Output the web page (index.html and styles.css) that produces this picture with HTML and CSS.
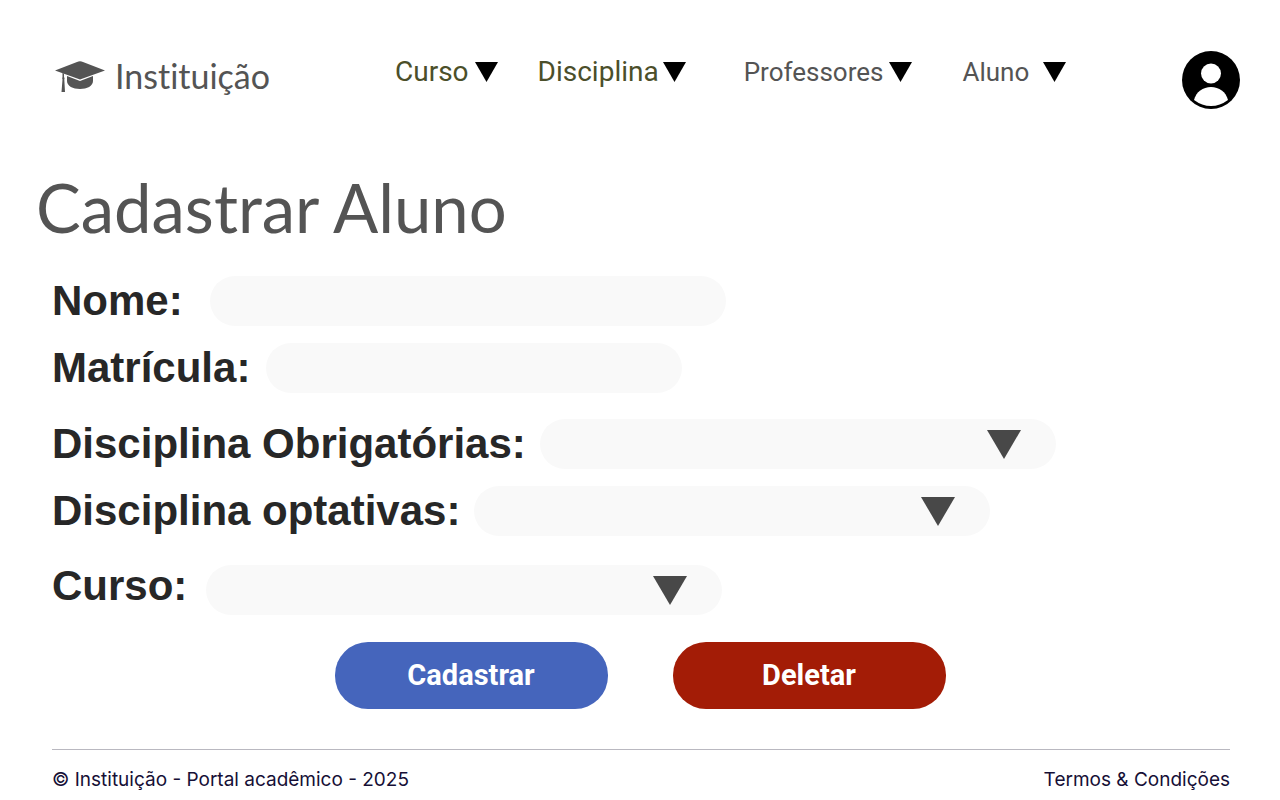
FILE: index.html
```html
<!DOCTYPE html>
<html lang="pt-BR">
<head>
<meta charset="utf-8">
<meta name="viewport" content="width=device-width, initial-scale=1">
<title>Cadastrar Aluno</title>
<link rel="stylesheet" href="styles.css">
</head>
<body>
<header class="header">
  <a class="brand" href="#">
    <svg class="brand-icon" viewBox="0 0 50 31" aria-hidden="true">
      <path d="M0 9.500L22 1Q25 -.3 28 1L50 9.500L25 18.500Z"/>
      <path d="M12 15L25 20L38 15V20C38 25 32 28 25 28S12 25 12 20Z"/>
      <path d="M7.500 12L9 12.500V16Q10 17 9.300 18.500L10 31H6.500L7.500 18.500Q6.800 17 7.500 16Z"/>
    </svg>
    <span>Instituição</span>
  </a>
  <nav class="nav">
    <button class="nav-item olive" type="button">Curso <svg class="caret" viewBox="0 0 23 20" aria-hidden="true"><path d="M0 0H23L11.500 20Z"/></svg></button>
    <button class="nav-item olive tight" type="button">Disciplina <svg class="caret" viewBox="0 0 23 20" aria-hidden="true"><path d="M0 0H23L11.500 20Z"/></svg></button>
    <button class="nav-item" type="button">Professores <svg class="caret" viewBox="0 0 23 20" aria-hidden="true"><path d="M0 0H23L11.500 20Z"/></svg></button>
    <button class="nav-item loose" type="button">Aluno <svg class="caret" viewBox="0 0 23 20" aria-hidden="true"><path d="M0 0H23L11.500 20Z"/></svg></button>
  </nav>
  <button class="profile" type="button" aria-label="Perfil">
    <svg viewBox="0 0 58 58" aria-hidden="true">
      <circle cx="29" cy="29" r="29"/>
      <circle class="person" cx="29" cy="22.500" r="10"/>
      <path class="person" d="M12 49C14 41 21 36 29 36S44 41 46 49Q38 55 29 55T12 49Z"/>
    </svg>
  </button>
</header>
<main class="main">
  <h1 class="title">Cadastrar Aluno</h1>
  <form class="form">
    <div class="group">
      <div class="row"><label class="label nome" for="nome">Nome:</label><input class="field" id="nome" type="text"></div>
      <div class="row"><label class="label matricula" for="matricula">Matrícula:</label><input class="field short" id="matricula" type="text"></div>
    </div>
    <div class="group">
      <div class="row"><label class="label obrigatorias" for="obrigatorias">Disciplina Obrigatórias:</label>
        <div class="field select"><select id="obrigatorias"><option></option></select><svg class="arrow" viewBox="0 0 34 29" aria-hidden="true"><path d="M0 0H34L17 29Z"/></svg></div></div>
      <div class="row"><label class="label optativas" for="optativas">Disciplina optativas:</label>
        <div class="field select"><select id="optativas"><option></option></select><svg class="arrow" viewBox="0 0 34 29" aria-hidden="true"><path d="M0 0H34L17 29Z"/></svg></div></div>
    </div>
    <div class="row last"><label class="label curso" for="curso">Curso:</label>
      <div class="field select"><select id="curso"><option></option></select><svg class="arrow" viewBox="0 0 34 29" aria-hidden="true"><path d="M0 0H34L17 29Z"/></svg></div></div>
    <div class="actions">
      <button class="button primary" type="submit">Cadastrar</button>
      <button class="button danger" type="button">Deletar</button>
    </div>
  </form>
</main>
<footer class="footer">
  <span>© Instituição - Portal acadêmico - 2025</span>
  <a href="#">Termos &amp; Condições</a>
</footer>
</body>
</html>
```
FILE: styles.css
```css
* {
  box-sizing: border-box;
}

body {
  margin: 0;
  background: #fff;
  color: #272727;
  font-family: "Liberation Sans", Arial, sans-serif;
}

button,
select,
input {
  margin: 0;
  padding: 0;
  border: 0;
  background: none;
  font: inherit;
}

button {
  cursor: pointer;
}

a {
  color: inherit;
  text-decoration: none;
}

.header {
  display: flex;
  align-items: flex-start;
  padding: 51px 40px 0 55px;
}

.brand {
  display: flex;
  align-items: center;
  gap: 10px;
  width: 340px;
  margin-top: 4px;
  color: #545454;
  font: 34px/42px Lato, sans-serif;
  font-variant-ligatures: none;
}

.brand-icon {
  width: 50px;
  height: 31px;
  fill: #545454;
}

.nav {
  display: flex;
  flex: 1;
}

.nav-item {
  display: flex;
  align-items: center;
  gap: 6px;
  margin-right: 50px;
  color: #545454;
  font: 26px/42px Roboto, sans-serif;
}

.nav-item.olive {
  margin-right: 40px;
  color: #4b4f2a;
  font-size: 28px;
  line-height: 40px;
}

.nav-item.olive.tight {
  gap: 4px;
  margin-right: 58px;
}

.nav-item.loose {
  gap: 14px;
}

.caret {
  width: 23px;
  height: 20px;
  fill: #000;
}

.profile {
  width: 58px;
  height: 58px;
}

.profile svg {
  display: block;
}

.person {
  fill: #fff;
}

.main {
  padding: 0 36px;
}

.title {
  margin: 56px 0 0;
  color: #545454;
  font: 67px/84px Lato, sans-serif;
}

.form {
  padding: 27px 16px 0;
}

.group {
  display: grid;
  gap: 17px;
  margin-bottom: 26px;
}

.row {
  display: flex;
  align-items: center;
}

.last {
  margin-top: 29px;
}

.label {
  flex: none;
  font-size: 42px;
  font-weight: 700;
  line-height: 50px;
  white-space: nowrap;
}

.nome {
  width: 158px;
}

.matricula {
  width: 214px;
}

.obrigatorias {
  width: 488px;
}

.optativas {
  width: 422px;
}

.curso {
  align-self: flex-start;
  width: 154px;
  line-height: 42px;
}

.field {
  width: 100%;
  max-width: 516px;
  height: 50px;
  padding: 0 24px;
  border-radius: 25px;
  background: #f9f9f9;
  font-size: 24px;
}

.field.short {
  max-width: 416px;
}

.select {
  position: relative;
  padding: 0;
}

.select select {
  width: 100%;
  height: 100%;
  padding: 0 80px 0 24px;
  border-radius: 25px;
  appearance: none;
}

.arrow {
  position: absolute;
  top: 11px;
  right: 35px;
  width: 34px;
  height: 29px;
  fill: #484848;
  pointer-events: none;
}

.actions {
  display: flex;
  justify-content: center;
  gap: 65px;
  margin-top: 27px;
}

.button {
  width: 273px;
  height: 67px;
  padding-bottom: 2px;
  border-radius: 33px;
  color: #fff;
  font: 700 29px/36px Roboto, sans-serif;
}

.primary {
  background: #4565bc;
}

.danger {
  background: #a31c06;
}

.footer {
  display: flex;
  justify-content: space-between;
  margin: 40px 50px 0 52px;
  padding-top: 16px;
  border-top: 1px solid #b9b8c0;
  color: #160f36;
  font: 19px/28px Inter, sans-serif;
}
```
